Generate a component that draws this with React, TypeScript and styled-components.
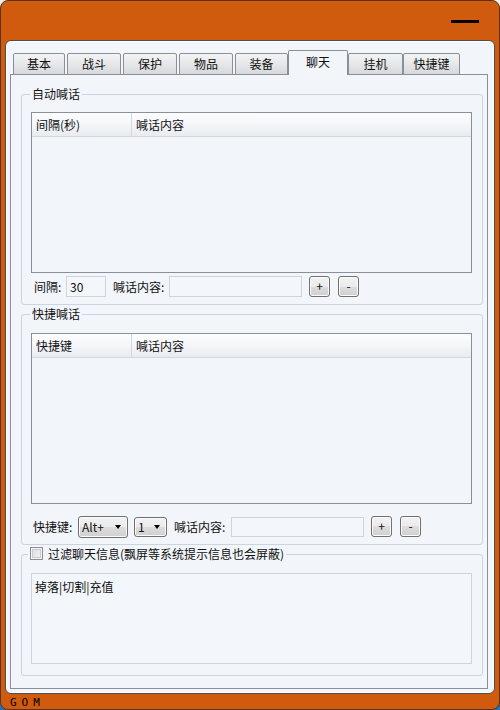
import React from "react";
import styled, { createGlobalStyle } from "styled-components";

const Global = createGlobalStyle`
  html, body { margin: 0; padding: 0; }
  body {
    width: 500px; height: 710px; overflow: hidden;
    background: linear-gradient(#eef0f2 0 50%, #1e72c0 50% 100%);
    font-family: "Noto Sans CJK SC", "Noto Sans", sans-serif;
    font-size: 12px; color: #111;
  }
`;

const Window = styled.div`
  width: 500px; height: 710px; box-sizing: border-box;
  border: 1px solid #5a3412; border-radius: 8px;
  background: #d05b0e;
  display: flex; flex-direction: column;
`;

const TitleBar = styled.div`
  height: 39px; display: flex; justify-content: flex-end; align-items: flex-start;
`;

const MinBar = styled.div`
  width: 28px; height: 3px; background: #000; margin: 19px 20px 0 0;
`;

const Panel = styled.div`
  margin-left: 4px; width: 490px; height: 655px; box-sizing: border-box;
  border: 1px solid #4c4c4c; border-radius: 6px;
  box-shadow: inset 0 0 0 1px #ffffff;
  background: #f2f5fa;
  padding: 9px 0 0 4px;
`;

const TabRow = styled.div`
  display: flex; align-items: flex-end; margin-left: 3px;
  position: relative; z-index: 1; margin-bottom: -1px; height: 25px;
`;

const Tab = styled.div<{ $w: number; $ml: number; $active?: boolean }>`
  box-sizing: border-box; width: ${(p) => p.$w}px; margin-left: ${(p) => p.$ml}px;
  height: ${(p) => (p.$active ? 25 : 22)}px;
  border: 1px solid #8a909a; border-bottom: ${(p) => (p.$active ? "none" : "1px solid #8a909a")};
  border-radius: 2px 2px 0 0;
  background: ${(p) => (p.$active ? "#f2f5fa" : "linear-gradient(#f4f4f4, #e6e7e9 50%, #d6d8dc)")};
  display: flex; align-items: center; justify-content: center;
  padding-bottom: ${(p) => (p.$active ? 3 : 0)}px;
  font-size: 12px; color: #111;
`;

const Pane = styled.div`
  box-sizing: border-box; width: 478px; height: 615px;
  border: 1px solid #8a909a;
  padding: 19px 4px 0 10px;
  display: flex; flex-direction: column; gap: 9px;
`;

const Group = styled.div<{ $pb: number }>`
  border: 1px solid #c9d5e1; border-radius: 3px;
  padding: 0 10px ${(p) => p.$pb}px 9px;
`;

const Legend = styled.div<{ $ml: number }>`
  margin-top: -8px; margin-left: ${(p) => p.$ml}px;
  width: fit-content; padding: 0 2px;
  line-height: 14px; height: 14px; background: #f2f5fa;
  display: flex; align-items: center; gap: 5px;
  font-size: 12px; white-space: nowrap;
`;

const CheckBox = styled.span`
  width: 13px; height: 13px; box-sizing: border-box;
  border: 1px solid #8e8f8f;
  background: linear-gradient(135deg, #d9dadc, #f6f6f6);
  box-shadow: inset 0 0 0 1px #f4f4f4, inset 0 0 0 2px #c9cbce;
`;

const List = styled.div<{ $h: number; $mt: number }>`
  box-sizing: border-box; height: ${(p) => p.$h}px; margin-top: ${(p) => p.$mt}px;
  border: 1px solid #8a909a; background: #f2f5fa;
`;

const Header = styled.div`
  display: flex; height: 23px; border-bottom: 1px solid #d3d8df;
  background: linear-gradient(#fdfdfe, #f4f6f9 50%, #e8ebf0);
`;

const HeadCell = styled.div<{ $w?: number }>`
  ${(p) => (p.$w ? `width: ${p.$w}px; border-right: 1px solid #d3d8df;` : "flex: 1;")}
  box-sizing: border-box; padding-left: 4px;
  display: flex; align-items: center; font-size: 12px;
`;

const Row = styled.div<{ $mt: number; $ml: number; $h: number }>`
  display: flex; align-items: center;
  margin-top: ${(p) => p.$mt}px; margin-left: ${(p) => p.$ml}px; height: ${(p) => p.$h}px;
`;

const Label = styled.span<{ $w: number; $ml?: number }>`
  width: ${(p) => p.$w}px; margin-left: ${(p) => p.$ml ?? 0}px;
  flex: none; white-space: nowrap; font-size: 12px;
`;

const Input = styled.div<{ $w: number; $h: number }>`
  box-sizing: border-box; width: ${(p) => p.$w}px; height: ${(p) => p.$h}px; flex: none;
  border: 1px solid #cdd5de; background: #f3f6fb;
  padding-left: 3px; display: flex; align-items: center; font-size: 12px;
`;

const Button = styled.div<{ $ml: number }>`
  box-sizing: border-box; width: 21px; height: 21px; margin-left: ${(p) => p.$ml}px; flex: none;
  border: 1px solid #707070; border-radius: 3px;
  background: linear-gradient(#f2f2f2, #ebebeb 50%, #dddddd 50%, #cfcfcf);
  box-shadow: inset 0 0 0 1px #fbfbfb;
  display: flex; align-items: center; justify-content: center;
  font-size: 12px; line-height: 1; padding-bottom: 1px;
`;

const Select = styled.div<{ $w: number; $h: number; $ml: number }>`
  box-sizing: border-box; width: ${(p) => p.$w}px; height: ${(p) => p.$h}px;
  margin-left: ${(p) => p.$ml}px; flex: none;
  border: 1px solid #707070; border-radius: 3px;
  background: linear-gradient(#f2f2f2, #ebebeb 50%, #dddddd 50%, #cfcfcf);
  box-shadow: inset 0 0 0 1px #fbfbfb;
  display: flex; align-items: center; justify-content: space-between;
  padding: 0 6px 0 3px; font-size: 12px;
`;

const Arrow = styled.span`
  width: 0; height: 0;
  border-left: 3.5px solid transparent; border-right: 3.5px solid transparent;
  border-top: 4px solid #000;
`;

const TextArea = styled.div`
  box-sizing: border-box; height: 91px; margin-top: 12px;
  border: 1px solid #cdd5de; background: #f3f6fb;
  padding: 5px 3px; font-size: 12px; line-height: 16px;
`;

const Footer = styled.div`
  height: 14px; padding-left: 9px; display: flex; align-items: center;
  font-family: "DejaVu Sans Mono", monospace; font-size: 11px; font-weight: normal;
  letter-spacing: 5px; color: #000; margin-top: 1px;
`;

const tabs = [
  { label: "基本", w: 52, ml: 0 },
  { label: "战斗", w: 54, ml: 2 },
  { label: "保护", w: 54, ml: 2 },
  { label: "物品", w: 54, ml: 2 },
  { label: "装备", w: 53, ml: 2 },
  { label: "聊天", w: 60, ml: 0, active: true },
  { label: "挂机", w: 55, ml: 0 },
  { label: "快捷键", w: 57, ml: 0 },
];

export default function App() {
  return (
    <>
      <Global />
      <Window>
        <TitleBar>
          <MinBar />
        </TitleBar>
        <Panel>
          <TabRow>
            {tabs.map((t) => (
              <Tab key={t.label} $w={t.w} $ml={t.ml} $active={t.active}>
                {t.label}
              </Tab>
            ))}
          </TabRow>
          <Pane>
            <Group $pb={7}>
              <Legend $ml={-1}>自动喊话</Legend>
              <List $h={161} $mt={11}>
                <Header>
                  <HeadCell $w={100}>间隔(秒)</HeadCell>
                  <HeadCell>喊话内容</HeadCell>
                </Header>
              </List>
              <Row $mt={3} $ml={3} $h={21}>
                <Label $w={32}>间隔:</Label>
                <Input $w={40} $h={21}>30</Input>
                <Label $w={56} $ml={7}>喊话内容:</Label>
                <Input $w={133} $h={21} />
                <Button $ml={7}>+</Button>
                <Button $ml={8}>-</Button>
              </Row>
            </Group>
            <Group $pb={6}>
              <Legend $ml={-1}>快捷喊话</Legend>
              <List $h={171} $mt={12}>
                <Header>
                  <HeadCell $w={100}>快捷键</HeadCell>
                  <HeadCell>喊话内容</HeadCell>
                </Header>
              </List>
              <Row $mt={12} $ml={2} $h={22}>
                <Label $w={45}>快捷键:</Label>
                <Select $w={50} $h={22} $ml={0}>
                  <span>Alt+</span>
                  <Arrow />
                </Select>
                <Select $w={33} $h={20} $ml={6}>
                  <span>1</span>
                  <Arrow />
                </Select>
                <Label $w={57} $ml={7}>喊话内容:</Label>
                <Input $w={133} $h={20} />
                <Button $ml={7}>+</Button>
                <Button $ml={8}>-</Button>
              </Row>
            </Group>
            <Group $pb={11}>
              <Legend $ml={-3}>
                <CheckBox />
                过滤聊天信息(飘屏等系统提示信息也会屏蔽)
              </Legend>
              <TextArea>掉落|切割|充值</TextArea>
            </Group>
          </Pane>
        </Panel>
        <Footer>GOM</Footer>
      </Window>
    </>
  );
}
